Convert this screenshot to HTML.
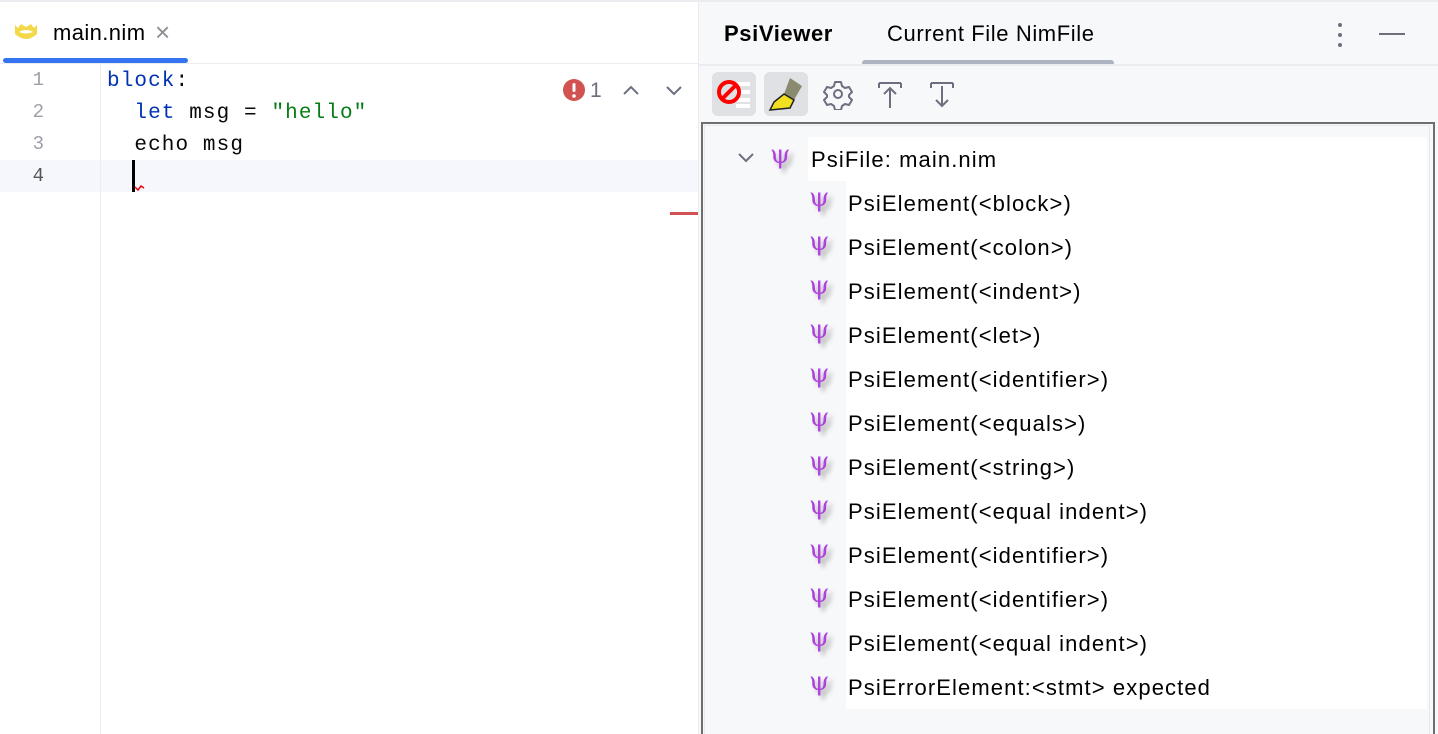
<!DOCTYPE html>
<html><head><style>
*{margin:0;padding:0;box-sizing:border-box}
body{width:1438px;height:734px;overflow:hidden;background:#fff;font-family:"Liberation Sans",sans-serif;position:relative}
.abs{position:absolute}
.code{font-family:"Liberation Mono",monospace;font-size:21px;letter-spacing:1.1px;color:#080808;white-space:pre}
.ln{font-family:"Liberation Mono",monospace;font-size:19px;color:#9da0a8;width:44px;text-align:right}
.row{position:absolute;height:44px;background:#fff;font-size:22px;letter-spacing:1.1px;color:#000;line-height:46px}
</style></head><body>
<div class="abs" style="left:0;top:0;width:1438px;height:2px;background:#ebecf0"></div>
<div class="abs" style="left:0;top:2px;width:698px;height:62px;background:#fff"></div>
<svg class="abs" style="left:12px;top:20px" width="28" height="24" viewBox="0 0 28 24"><path d="M3 5 L6 8 L9 4 L14 7 L19 4 L22 8 L25 5 L25 14 Q14 24 3 14Z" fill="#f3d94a"/><path d="M7 12 Q14 8 21 12 Q14 15 7 12Z" fill="#fff"/></svg>
<div class="abs" style="left:53px;top:20px;font-size:22px;letter-spacing:0.4px;color:#000">main.nim</div>
<div class="abs" style="left:155px;top:17px;font-size:26px;color:#8c8f96">×</div>
<div class="abs" style="left:3px;top:58px;width:185px;height:5px;background:#3574f0;border-radius:3px"></div>
<div class="abs" style="left:0;top:63px;width:698px;height:1px;background:#ebecf0"></div>
<div class="abs" style="left:0;top:160px;width:698px;height:32px;background:#f5f7fc"></div>
<div class="abs" style="left:100px;top:64px;width:1px;height:670px;background:#ebecf0"></div>
<div class="abs ln" style="left:0;top:69px">1</div>
<div class="abs ln" style="left:0;top:101px">2</div>
<div class="abs ln" style="left:0;top:133px">3</div>
<div class="abs ln" style="left:0;top:165px;color:#555">4</div>
<div class="abs code" style="left:107px;top:70px"><span style="color:#0033b3">block</span>:</div>
<div class="abs code" style="left:107px;top:102px">  <span style="color:#0033b3">let</span> msg = <span style="color:#067d17">"hello"</span></div>
<div class="abs code" style="left:107px;top:134px">  echo msg</div>
<div class="abs" style="left:132px;top:160px;width:3px;height:32px;background:#000"></div>
<svg class="abs" style="left:135px;top:185px" width="10" height="6"><path d="M0 2 L3 5 L6 1 L9 3" stroke="#e00" stroke-width="1.5" fill="none"/></svg>
<svg class="abs" style="left:562px;top:78px" width="24" height="24"><circle cx="12" cy="12" r="11" fill="#d25252"/><rect x="10.5" y="5" width="3" height="9" rx="1.5" fill="#fff"/><circle cx="12" cy="18" r="1.8" fill="#fff"/></svg>
<div class="abs" style="left:590px;top:79px;font-size:21px;color:#6c707e">1</div>
<svg class="abs" style="left:620px;top:80px" width="22" height="20"><path d="M4 14 L11 7 L18 14" stroke="#6c707e" stroke-width="2" fill="none"/></svg>
<svg class="abs" style="left:663px;top:80px" width="22" height="20"><path d="M4 7 L11 14 L18 7" stroke="#6c707e" stroke-width="2" fill="none"/></svg>
<div class="abs" style="left:670px;top:212px;width:28px;height:3px;background:#d25252"></div>
<div class="abs" style="left:698px;top:2px;width:740px;height:732px;background:#f7f8fa;border-left:1px solid #ebecf0"></div>
<div class="abs" style="left:724px;top:21px;font-size:22px;letter-spacing:0.6px;font-weight:bold;color:#000">PsiViewer</div>
<div class="abs" style="left:887px;top:21px;font-size:22px;letter-spacing:0.6px;color:#000">Current File NimFile</div>
<div class="abs" style="left:862px;top:60px;width:252px;height:6px;background:#aeb3c2;border-radius:3px"></div>
<div class="abs" style="left:699px;top:64px;width:739px;height:2px;background:#ebecf0"></div>
<div class="abs" style="left:1338px;top:23px;width:4px;height:4px;border-radius:2px;background:#6c707e;box-shadow:0 10px 0 #6c707e,0 20px 0 #6c707e"></div>
<div class="abs" style="left:1379px;top:33px;width:26px;height:2px;background:#6c707e"></div>
<div class="abs" style="left:712px;top:72px;width:44px;height:44px;background:#dfe1e5;border-radius:6px"></div>
<svg class="abs" style="left:712px;top:72px" width="44" height="44"><rect x="22" y="10" width="16" height="4" fill="#fff"/><rect x="24" y="18" width="14" height="4" fill="#fff"/><rect x="24" y="26" width="14" height="4" fill="#fff"/><rect x="24" y="32" width="14" height="4" fill="#fff"/><circle cx="17" cy="20" r="10" fill="none" stroke="#f00" stroke-width="4"/><path d="M10 27 L24 13" stroke="#f00" stroke-width="4"/></svg>
<div class="abs" style="left:764px;top:72px;width:44px;height:44px;background:#dfe1e5;border-radius:6px"></div>
<svg class="abs" style="left:764px;top:72px" width="44" height="44"><path d="M26 6 L38 14 L30 28 L20 22Z" fill="#8a8a70"/><path d="M20 22 L30 28 L26 36 L6 38 L10 30Z" fill="#f0e020" stroke="#222" stroke-width="1.5"/></svg>
<svg class="abs" style="left:822px;top:78px" width="32" height="32" viewBox="0 0 32 32"><path d="M13 4h6l1 4 3 2 4-1 3 5-3 3v2l3 3-3 5-4-1-3 2-1 4h-6l-1-4-3-2-4 1-3-5 3-3v-2l-3-3 3-5 4 1 3-2z" fill="none" stroke="#6c707e" stroke-width="2" stroke-linejoin="round"/><circle cx="16" cy="16" r="4" fill="none" stroke="#6c707e" stroke-width="2"/></svg>
<svg class="abs" style="left:876px;top:80px" width="28" height="30"><path d="M3 3h22M3 3v5M25 3v5M14 8v20M8 14l6-6 6 6" stroke="#6c707e" stroke-width="2" fill="none"/></svg>
<svg class="abs" style="left:928px;top:80px" width="28" height="30"><path d="M3 3h22M3 3v5M25 3v5M14 6v20M8 20l6 6 6-6" stroke="#6c707e" stroke-width="2" fill="none"/></svg>
<div class="abs" style="left:701px;top:122px;width:734px;height:612px;border:2px solid #6e6e6e;border-bottom:none;background:#f7f8fa"></div>
<div class="abs" style="left:704px;top:125px;width:726px;height:609px;border:1px solid #e8e9ee;border-bottom:none"></div>
<svg class="abs" style="left:736px;top:150px" width="20" height="16"><path d="M3 4 L10 11 L17 4" stroke="#6c707e" stroke-width="2" fill="none"/></svg>
<div class="row" style="left:808px;top:137px;width:619px;padding-left:3px">PsiFile: main.nim</div>
<div class="abs" style="left:770px;top:140px;color:#b040e0;font-size:26px;font-family:'DejaVu Serif',serif;font-weight:100;text-shadow:4px 4px 5px #aaa">ψ</div>
<div id="rows"></div>
<script>
var t=["PsiElement(&lt;block&gt;)","PsiElement(&lt;colon&gt;)","PsiElement(&lt;indent&gt;)","PsiElement(&lt;let&gt;)","PsiElement(&lt;identifier&gt;)","PsiElement(&lt;equals&gt;)","PsiElement(&lt;string&gt;)","PsiElement(&lt;equal indent&gt;)","PsiElement(&lt;identifier&gt;)","PsiElement(&lt;identifier&gt;)","PsiElement(&lt;equal indent&gt;)","PsiErrorElement:&lt;stmt&gt; expected"];
var h="";for(var i=0;i<t.length;i++){var y=181+i*44;
h+='<div class="row" style="left:846px;top:'+y+'px;width:581px;padding-left:2px">'+t[i]+'</div>';
h+='<div class="abs" style="left:809px;top:'+(y+2)+'px;color:#b040e0;font-size:26px;font-family:\'DejaVu Serif\',serif;text-shadow:4px 4px 5px #aaa">ψ</div>';}
document.getElementById("rows").innerHTML=h;
</script>
</body></html>
